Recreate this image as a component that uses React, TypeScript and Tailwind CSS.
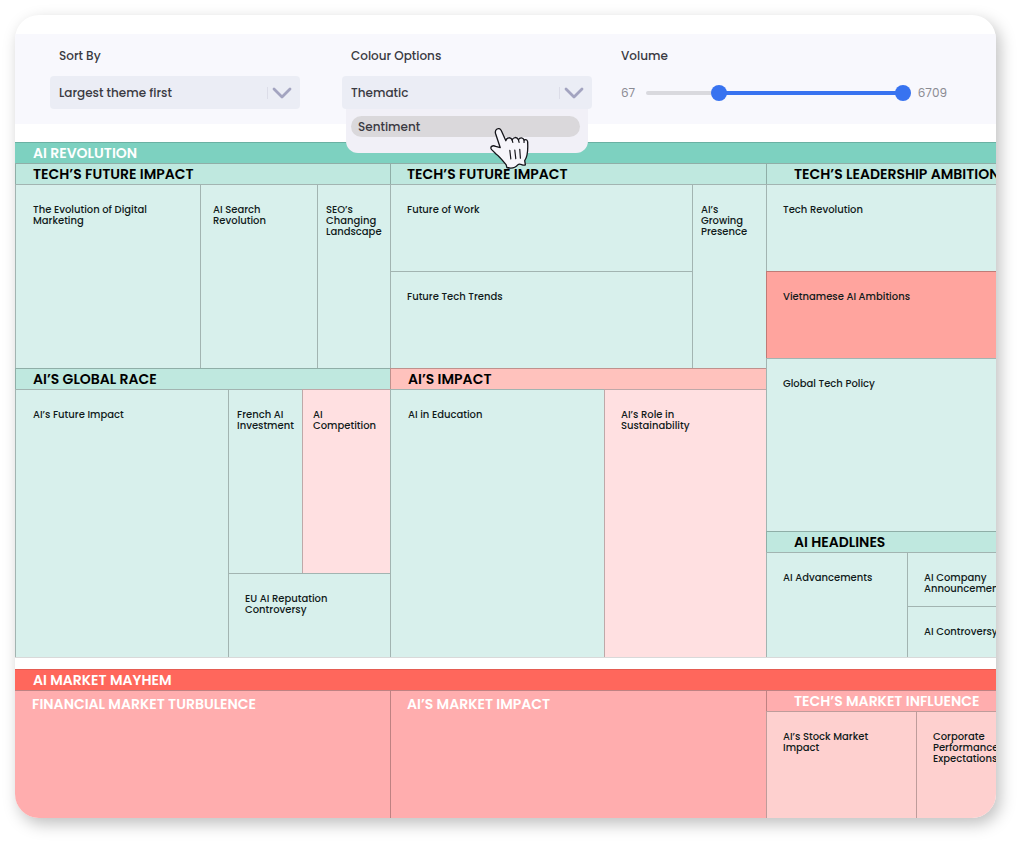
import React, { useState } from 'react';

const MIN_VOLUME = 67;
const MAX_VOLUME = 6709;

const tones = {
  mint: 'bg-[#d8f0ec]',
  mintHead: 'bg-[#bfe8df] text-black',
  blush: 'bg-[#ffe0e1]',
  blushHead: 'bg-[#ffc2bd] text-black',
  salmon: 'bg-[#ffa49e]',
  rose: 'bg-[#ffadae] text-white',
  petal: 'bg-[#fed0cf]',
};

type Tone = keyof typeof tones;

const Chevron: React.FC = () => (
  <svg className="pointer-events-none absolute right-2 top-[11px] h-3 w-5" viewBox="0 0 20 12" fill="none" aria-hidden="true">
    <path d="M2 2 10 10 18 2" stroke="#a3a4c0" strokeWidth="2.8" strokeLinecap="round" strokeLinejoin="round" />
  </svg>
);

const HandCursor: React.FC = () => (
  <svg className="pointer-events-none absolute left-[144px] top-[18px] h-[42px] w-[39px]" viewBox="57 36 118 126" aria-hidden="true">
    <path
      d="M88 98 L74 56 C70 43 84 34 91 46 L105 77 C107 66 121 65 124 75 C126 66 139 64 143 74 C147 66 157 66 160 75 C167 71 172 76 171 85 C172 106 172 124 162 137 L164 150 C155 155 149 142 141 150 C133 160 119 161 108 158 L106 150 C96 138 86 125 76 118 L62 104 C55 96 65 89 74 94 Z"
      fill="#f6f5fa"
      stroke="#15151a"
      strokeWidth="4"
      strokeLinejoin="round"
    />
    <path d="M117 106 120 132M132 105 135 131M147 103 149 130M124 75 126 82M143 74 145 82M160 75 160 82" stroke="#15151a" strokeWidth="3.6" strokeLinecap="round" />
  </svg>
);

interface SelectFieldProps {
  id: string;
  label: string;
  value: string;
  children?: React.ReactNode;
}

const SelectField: React.FC<SelectFieldProps> = ({ id, label, value, children }) => (
  <div className="w-[250px]">
    <label htmlFor={id} className="block pl-[9px] text-xs leading-5 font-medium text-[#3a3a42]">{label}</label>
    <div className="relative mt-[10px]">
      <select
        id={id}
        defaultValue={value}
        className="block h-[33px] w-full appearance-none rounded-sm bg-[#ebedf5] pl-[9px] pr-9 text-xs font-medium text-[#3a3a42] outline-none"
      >
        <option>{value}</option>
      </select>
      <span className="pointer-events-none absolute right-8 top-[11px] h-3 w-px bg-[#dcdde8]" />
      <Chevron />
      {children}
    </div>
  </div>
);

const thumb =
  'pointer-events-none absolute inset-0 h-4 w-full appearance-none bg-transparent outline-none [&::-webkit-slider-thumb]:pointer-events-auto [&::-webkit-slider-thumb]:h-4 [&::-webkit-slider-thumb]:w-4 [&::-webkit-slider-thumb]:appearance-none [&::-webkit-slider-thumb]:rounded-full [&::-webkit-slider-thumb]:bg-[#3873f0]';

const VolumeRange: React.FC = () => {
  const [low, setLow] = useState(1801);
  const [high, setHigh] = useState(MAX_VOLUME);
  const toPercent = (v: number) => ((v - MIN_VOLUME) / (MAX_VOLUME - MIN_VOLUME)) * 100;

  return (
    <div className="w-[326px]">
      <div className="text-xs leading-5 font-medium text-[#3a3a42]">Volume</div>
      <div className="mt-[10px] flex h-[33px] items-center text-xs text-[#8b8b93]">
        <span className="w-[25px]">{MIN_VOLUME}</span>
        <div className="relative h-4 w-[265px]">
          <div className="absolute inset-x-0 top-[6px] h-1 rounded-full bg-[#d9d9de]" />
          <div className="absolute inset-x-2 top-[6px] h-1">
            <div
              className="absolute h-full bg-[#3873f0]"
              style={{ left: `${toPercent(low)}%`, right: `${100 - toPercent(high)}%` }}
            />
          </div>
          <input
            type="range"
            aria-label="Minimum volume"
            min={MIN_VOLUME}
            max={MAX_VOLUME}
            value={low}
            onChange={(e) => setLow(Math.min(Number(e.target.value), high))}
            className={thumb}
          />
          <input
            type="range"
            aria-label="Maximum volume"
            min={MIN_VOLUME}
            max={MAX_VOLUME}
            value={high}
            onChange={(e) => setHigh(Math.max(Number(e.target.value), low))}
            className={thumb}
          />
        </div>
        <span className="pl-[7px]">{MAX_VOLUME}</span>
      </div>
    </div>
  );
};

interface BoxProps {
  tone: Tone;
  className?: string;
  children?: React.ReactNode;
}

const Heading: React.FC<BoxProps> = ({ tone, className = 'pl-4', children }) => (
  <h3 className={`h-[21px] border-l border-t border-black/25 text-sm leading-5 font-semibold whitespace-nowrap ${tones[tone]} ${className}`}>
    {children}
  </h3>
);

const Cell: React.FC<BoxProps> = ({ tone, className = 'px-4', children }) => (
  <div className={`min-w-0 border-l border-t border-black/25 pt-[19px] text-[10px] leading-[11px] font-medium whitespace-pre-line text-[#101a1a] ${tones[tone]} ${className}`}>
    {children}
  </div>
);

const App: React.FC = () => {
  return (
    <div className="bg-white pt-[15px] pr-7 pb-7 pl-[15px] font-['Poppins','Inter',sans-serif]">
      <main className="overflow-hidden rounded-3xl bg-white pt-[19px] shadow-[4px_6px_16px_rgba(0,0,0,0.25)]">
        <div className="flex h-[90px] bg-[#f8f8fd] pt-3 pl-[35px]">
          <SelectField id="sort" label="Sort By" value="Largest theme first" />
          <div className="ml-[42px]">
            <SelectField id="colour" label="Colour Options" value="Thematic">
              <div className="absolute inset-x-1 top-[33px] z-10 h-11 rounded-b-xl bg-[#f1f0f7] pt-[7px] pr-2 pl-[5px]">
                <button type="button" className="block h-[21px] w-full rounded-full bg-[#dad8db] pl-[7px] text-left text-xs font-medium text-[#3a3a42]">
                  Sentiment
                </button>
                <HandCursor />
              </div>
            </SelectField>
          </div>
          <div className="ml-[29px]">
            <VolumeRange />
          </div>
        </div>

        <section className="mt-[18px] border-b border-black/15">
          <h2 className="h-[21px] border-t border-black/15 bg-[#7dd1c0] pl-[18px] text-sm leading-5 font-semibold text-white">AI REVOLUTION</h2>
          <div className="grid grid-cols-[375fr_376fr_230fr]">
            <div className="min-w-0">
              <Heading tone="mintHead" className="pl-[17px]">TECH’S FUTURE IMPACT</Heading>
              <div className="grid h-[184px] grid-cols-[185fr_117fr_73fr]">
                <Cell tone="mint" className="pl-[17px]">{'The Evolution of Digital\nMarketing'}</Cell>
                <Cell tone="mint" className="px-3">{'AI Search\nRevolution'}</Cell>
                <Cell tone="mint" className="pl-2">{'SEO’s\nChanging\nLandscape'}</Cell>
              </div>
              <Heading tone="mintHead" className="pl-[17px]">AI’S GLOBAL RACE</Heading>
              <div className="grid h-[268px] grid-cols-[213fr_162fr]">
                <Cell tone="mint" className="pl-[17px]">AI’s Future Impact</Cell>
                <div className="grid min-w-0 grid-cols-[74fr_88fr] grid-rows-[184fr_84fr]">
                  <Cell tone="mint" className="pl-2">{'French AI\nInvestment'}</Cell>
                  <Cell tone="blush" className="pl-[10px]">{'AI\nCompetition'}</Cell>
                  <Cell tone="mint" className="col-span-2 px-4">{'EU AI Reputation\nControversy'}</Cell>
                </div>
              </div>
            </div>

            <div className="min-w-0">
              <Heading tone="mintHead">TECH’S FUTURE IMPACT</Heading>
              <div className="grid h-[184px] grid-cols-[302fr_74fr] grid-rows-[87fr_97fr]">
                <Cell tone="mint">Future of Work</Cell>
                <Cell tone="mint" className="row-span-2 pl-2">{'AI’s\nGrowing\nPresence'}</Cell>
                <Cell tone="mint">Future Tech Trends</Cell>
              </div>
              <Heading tone="blushHead" className="pl-[17px]">AI’S IMPACT</Heading>
              <div className="grid h-[268px] grid-cols-[214fr_162fr]">
                <Cell tone="mint" className="pl-[17px]">AI in Education</Cell>
                <Cell tone="blush">{'AI’s Role in\nSustainability'}</Cell>
              </div>
            </div>

            <div className="min-w-0">
              <Heading tone="mintHead" className="pl-[27px]">TECH’S LEADERSHIP AMBITIONS</Heading>
              <div className="grid h-[347px] grid-rows-[87fr_87fr_173fr]">
                <Cell tone="mint">Tech Revolution</Cell>
                <Cell tone="salmon">Vietnamese AI Ambitions</Cell>
                <Cell tone="mint">Global Tech Policy</Cell>
              </div>
              <Heading tone="mintHead" className="pl-[27px]">AI HEADLINES</Heading>
              <div className="grid h-[105px] grid-cols-[141fr_89fr] grid-rows-[54fr_51fr]">
                <Cell tone="mint" className="row-span-2 px-4">AI Advancements</Cell>
                <Cell tone="mint" className="pl-4">{'AI Company\nAnnouncements'}</Cell>
                <Cell tone="mint" className="pl-4"><span className="whitespace-nowrap">AI Controversy</span></Cell>
              </div>
            </div>
          </div>
        </section>

        <section className="mt-[11px]">
          <h2 className="h-[21px] border-t border-black/10 bg-[#ff675c] pl-[18px] text-sm leading-5 font-semibold text-white">AI MARKET MAYHEM</h2>
          <div className="grid h-32 grid-cols-[375fr_376fr_230fr]">
            <div className={`min-w-0 border-t border-black/25 pt-[3px] pl-[17px] ${tones.rose}`}>
              <h3 className="text-sm leading-5 font-semibold">FINANCIAL MARKET TURBULENCE</h3>
            </div>
            <div className={`min-w-0 border-l border-t border-black/25 pt-[3px] pl-4 ${tones.rose}`}>
              <h3 className="text-sm leading-5 font-semibold">AI’S MARKET IMPACT</h3>
            </div>
            <div className="flex min-w-0 flex-col">
              <Heading tone="rose" className="pl-[27px]">TECH’S MARKET INFLUENCE</Heading>
              <div className="grid flex-1 grid-cols-[150fr_80fr]">
                <Cell tone="petal">{'AI’s Stock Market\nImpact'}</Cell>
                <Cell tone="petal" className="pl-4">{'Corporate\nPerformance\nExpectations'}</Cell>
              </div>
            </div>
          </div>
        </section>
      </main>
    </div>
  );
};

export default App;
